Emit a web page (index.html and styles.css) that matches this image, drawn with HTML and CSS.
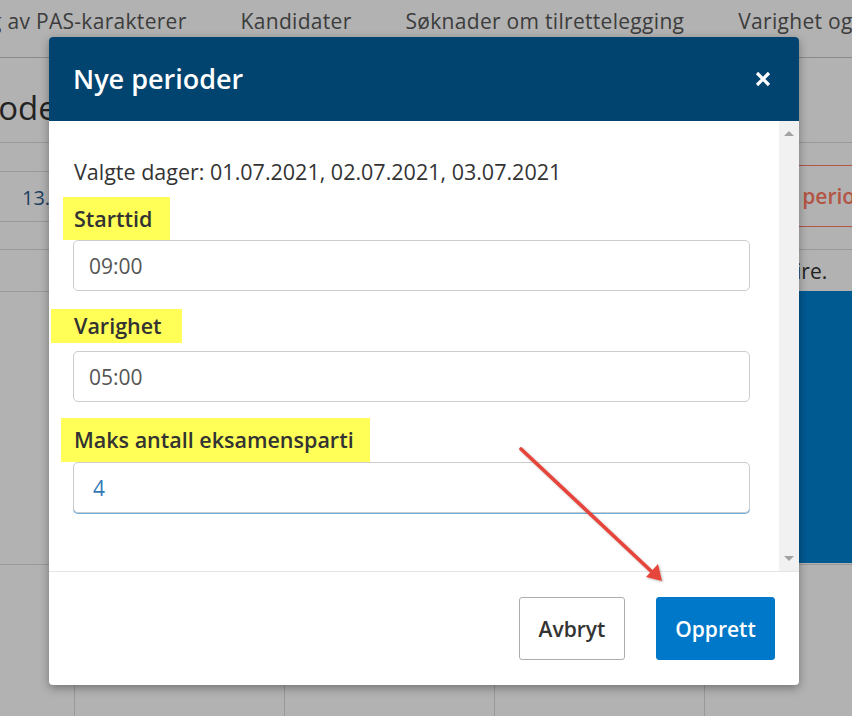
FILE: index.html
```html
<!DOCTYPE html>
<html lang="no">
<head>
<meta charset="utf-8">
<title>Nye perioder</title>
<link rel="stylesheet" href="styles.css">
</head>
<body>
<div class="page">
  <nav class="tabs">
    <span class="tab tab-first">g av PAS-karakterer</span>
    <span class="tab">Kandidater</span>
    <span class="tab">Søknader om tilrettelegging</span>
    <span class="tab">Varighet og tidspunkt</span>
  </nav>
  <h1 class="page-title">Perioder</h1>
  <div class="layout">
    <div class="main-col">
      <div class="row row-a"></div>
      <div class="row row-b">13.07.2021</div>
      <div class="row row-c"></div>
      <div class="row row-d"></div>
      <div class="row row-e"></div>
    </div>
    <aside class="side-col">
      <div class="side-top"></div>
      <div class="new-btn">Nye perioder</div>
      <div class="side-note">fire.</div>
      <div class="side-block"></div>
    </aside>
  </div>
  <div class="calendar">
    <div class="cal-cell"></div>
    <div class="cal-cell"></div>
    <div class="cal-cell"></div>
    <div class="cal-cell"></div>
    <div class="cal-cell"></div>
  </div>

  <div class="backdrop"></div>

  <div class="modal">
    <header class="modal-header">
      <h2 class="modal-title">Nye perioder</h2>
      <button class="close" type="button" aria-label="Lukk">
        <svg width="16" height="16" viewBox="0 0 16 16"><path d="M2 2 L14 14 M14 2 L2 14" stroke="#fff" stroke-width="3.2" stroke-linecap="butt"/></svg>
      </button>
    </header>
    <div class="modal-body">
      <div class="form">
        <p class="selected">Valgte dager: 01.07.2021, 02.07.2021, 03.07.2021</p>
        <label class="label hl-start">Starttid</label>
        <input class="field" type="text" value="09:00">
        <label class="label hl-var">Varighet</label>
        <input class="field" type="text" value="05:00">
        <label class="label hl-maks">Maks antall eksamensparti</label>
        <input class="field field-focus" type="text" value="4">
      </div>
      <div class="scrollbar">
        <span class="arrow-up"></span>
        <span class="arrow-down"></span>
      </div>
    </div>
    <footer class="modal-footer">
      <button class="btn btn-default" type="button">Avbryt</button>
      <button class="btn btn-primary" type="button">Opprett</button>
    </footer>
  </div>

  <svg class="annotation" width="852" height="716" viewBox="0 0 852 716">
    <defs>
      <filter id="sh" x="-10%" y="-10%" width="130%" height="130%">
        <feDropShadow dx="1" dy="1" stdDeviation="1.2" flood-color="#000" flood-opacity="0.3"/>
      </filter>
    </defs>
    <g filter="url(#sh)">
      <line x1="521" y1="449" x2="651" y2="571" stroke="#e5443a" stroke-width="3.6" stroke-linecap="round"/>
      <polygon points="662,581 646,577 658,564" fill="#e5443a"/>
    </g>
  </svg>
</div>
</body>
</html>
```

FILE: styles.css
```css
* { box-sizing: border-box; }

html, body {
  margin: 0;
  padding: 0;
  width: 852px;
  height: 716px;
  overflow: hidden;
  background: #fff;
  font-family: "Open Sans", "Noto Sans", sans-serif;
}

.page {
  position: relative;
  width: 852px;
  height: 716px;
  overflow: hidden;
}

/* ---------- background page ---------- */
.tabs {
  display: flex;
  gap: 54px;
  height: 58px;
  padding-top: 7px;
  border-bottom: 1px solid #c8c8c8;
  white-space: nowrap;
}
.tab {
  font-size: 21px;
  line-height: 28px;
  letter-spacing: 0.3px;
  color: #575757;
}
.tab-first { margin-left: -10px; }

.page-title {
  margin: 0 0 0 -62px;
  padding-top: 28px;
  height: 84px;
  font-size: 33px;
  line-height: 44px;
  font-weight: 400;
  color: #333;
}

.layout {
  display: grid;
  grid-template-columns: 740px 112px;
}
.row { border-top: 1px solid #dcdcdc; }
.row-a { height: 29px; }
.row-b {
  height: 50px;
  padding-left: 22px;
  font-size: 20px;
  line-height: 52px;
  color: #2f5a88;
}
.row-c { height: 28px; }
.row-d { height: 42px; }
.row-e { height: 273px; }

.side-col { display: flex; flex-direction: column; }
.side-top { height: 23px; border-top: 1px solid #dcdcdc; }
.new-btn {
  height: 62px;
  border-top: 1px solid #ff7a62;
  border-bottom: 1px solid #ff7a62;
  padding-left: 17px;
  font-size: 21px;
  font-weight: 600;
  line-height: 60px;
  color: #ff7a62;
  white-space: nowrap;
}
.side-note {
  margin-top: 22px;
  height: 42px;
  border-top: 1px solid #dcdcdc;
  padding-left: 49px;
  font-size: 21px;
  line-height: 42px;
  color: #313131;
}
.side-block {
  height: 272px;
  background: #0081d2;
}

.calendar {
  display: grid;
  grid-template-columns: 74px 210px 210px 210px 1fr;
  height: 152px;
  border-top: 1px solid #dcdcdc;
}
.cal-cell + .cal-cell { border-left: 1px solid #dcdcdc; }

.backdrop {
  position: absolute;
  inset: 0;
  background: rgba(0, 0, 0, 0.3);
}

/* ---------- modal ---------- */
.modal {
  position: absolute;
  left: 49px;
  top: 37px;
  width: 750px;
  height: 648px;
  background: #fff;
  border-radius: 4px;
  overflow: hidden;
  box-shadow: 0 3px 10px rgba(0, 0, 0, 0.35);
  display: flex;
  flex-direction: column;
}

.modal-header {
  height: 84px;
  flex: none;
  background: #00446f;
  display: flex;
  align-items: center;
  justify-content: space-between;
  padding: 0 28px 0 24px;
}
.modal-title {
  margin: 0;
  font-size: 27px;
  font-weight: 600;
  color: #fff;
  line-height: 36px;
}
.close {
  border: 0;
  background: none;
  padding: 0;
  width: 16px;
  height: 16px;
  display: flex;
}

.modal-body {
  height: 450px;
  flex: none;
  display: flex;
}
.form {
  flex: 1;
  padding: 38px 29px 0 24px;
  display: flex;
  flex-direction: column;
  align-items: flex-start;
}
.selected {
  margin: 0;
  font-size: 21.5px;
  line-height: 26px;
  color: #333;
  padding-left: 1px;
  white-space: nowrap;
}
.label {
  display: block;
  background: #ffff57;
  font-size: 21.5px;
  font-weight: 600;
  color: #333;
  white-space: nowrap;
}
.hl-start {
  margin: 12px 0 0 -10px;
  width: 107px;
  height: 43px;
  line-height: 43px;
  padding-left: 11px;
}
.hl-var {
  margin: 18px 0 0 -22px;
  width: 131px;
  height: 34px;
  line-height: 34px;
  padding-left: 23px;
}
.hl-maks {
  margin: 16px 0 0 -12px;
  width: 309px;
  height: 44px;
  line-height: 44px;
  padding-left: 13px;
}
.field {
  display: block;
  width: 677px;
  height: 51px;
  margin: 0;
  padding: 0 15px;
  border: 1px solid #cccccc;
  border-radius: 5px;
  background: #fff;
  font-family: "Open Sans", "Noto Sans", sans-serif;
  font-size: 21px;
  color: #555;
  outline: none;
}
.hl-var + .field { margin-top: 8px; }
.field-focus {
  color: #337ab7;
  padding-left: 19px;
  box-shadow: 0 1px 0 #6aaee2;
}

.scrollbar {
  width: 20px;
  flex: none;
  background: #f1f1f1;
  display: flex;
  flex-direction: column;
  justify-content: space-between;
  align-items: center;
  padding: 10px 0 10px;
}
.arrow-up, .arrow-down {
  width: 0;
  height: 0;
  border-left: 5px solid transparent;
  border-right: 5px solid transparent;
}
.arrow-up { border-bottom: 5px solid #a3a3a3; }
.arrow-down { border-top: 5px solid #a3a3a3; }

.modal-footer {
  flex: 1;
  border-top: 1px solid #e5e5e5;
  display: flex;
  justify-content: flex-end;
  align-items: flex-start;
  gap: 31px;
  padding: 25px 24px 0 0;
}
.btn {
  height: 63px;
  padding: 0 10px;
  border-radius: 3px;
  font-family: "Open Sans", "Noto Sans", sans-serif;
  font-size: 21px;
  font-weight: 600;
}
.btn-default {
  width: 106px;
  background: #fff;
  border: 1px solid #adadad;
  color: #333;
}
.btn-primary {
  width: 119px;
  background: #0078c9;
  border: 1px solid #0078c9;
  color: #fff;
}

.annotation {
  position: absolute;
  left: 0;
  top: 0;
  pointer-events: none;
}
```
